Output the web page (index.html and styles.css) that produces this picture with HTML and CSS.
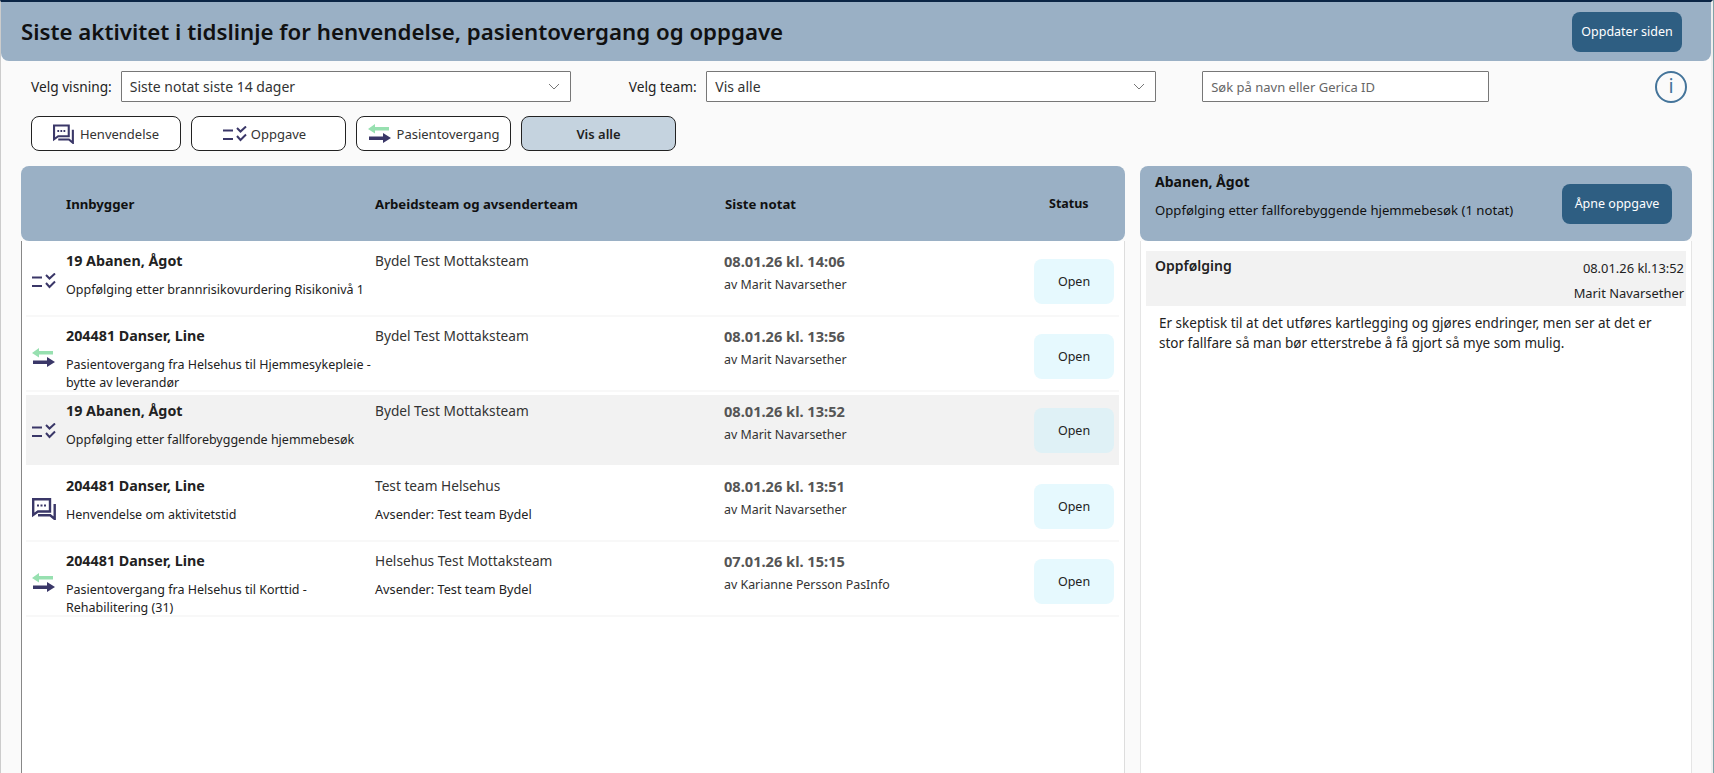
FILE: index.html
```html
<!DOCTYPE html>
<html lang="en">
<head>
    <meta charset="UTF-8">
    <meta name="viewport" content="width=device-width, initial-scale=1.0">
    <title>Siste aktivitet</title>
    <link rel="stylesheet" href="styles.css">
</head>
<body>
<svg class="defs">
    <symbol id="ico-chat" viewBox="0 0 24 22">
        <path d="M1.200 1.200h16.800v12.300H6L1.200 17z" fill="none" stroke="#3a3768" stroke-width="2.400"/>
        <path d="M5 7.500h9" stroke="#3a3768" stroke-width="2.200" stroke-dasharray="2 1.500"/>
        <path d="M22.700 6v15l-4.500-3.700H6" fill="none" stroke="#3a3768" stroke-width="2.400"/>
    </symbol>
    <symbol id="ico-task" viewBox="0 0 24 16">
        <path d="M0 4.500h10M0 13h10" stroke="#3a3768" stroke-width="2" fill="none"/>
        <path d="M14 2l3.500 3.500 5.500-5M14 10l3.500 4 5.500-5.500" stroke="#3a3768" stroke-width="2" fill="none"/>
    </symbol>
    <symbol id="ico-move" viewBox="0 0 23 19">
        <path d="M7 0v3h14v3.500H7v3L0 5z" fill="#97e0b0"/>
        <path d="M15 9v3.500H1V16h14v3l8-5z" fill="#3a3768"/>
    </symbol>
</svg>

<header class="topbar">
    <h1>Siste aktivitet i tidslinje for henvendelse, pasientovergang og oppgave</h1>
    <button class="dark-btn refresh">Oppdater siden</button>
</header>

<div class="filters">
    <label>Velg visning:</label>
    <div class="select first">Siste notat siste 14 dager<svg viewBox="0 0 12 7"><path d="M1 1l5 5 5-5"/></svg></div>
    <label class="team-label">Velg team:</label>
    <div class="select second">Vis alle<svg viewBox="0 0 12 7"><path d="M1 1l5 5 5-5"/></svg></div>
    <div class="search">Søk på navn eller Gerica ID</div>
    <div class="info">i</div>
</div>

<div class="types">
    <button class="type-btn"><svg class="i-chat"><use href="#ico-chat"/></svg>Henvendelse</button>
    <button class="type-btn task-btn"><svg class="i-task"><use href="#ico-task"/></svg>Oppgave</button>
    <button class="type-btn"><svg class="i-move"><use href="#ico-move"/></svg>Pasientovergang</button>
    <button class="type-btn active">Vis alle</button>
</div>

<main class="content">
    <section class="list">
        <div class="list-head">
            <span>Innbygger</span>
            <span>Arbeidsteam og avsenderteam</span>
            <span>Siste notat</span>
            <span class="status-head">Status</span>
        </div>
        <div class="list-body">
            <div class="row">
                <svg class="row-icon i-task"><use href="#ico-task"/></svg>
                <div class="who"><b>19 Abanen, Ågot</b><p>Oppfølging etter brannrisikovurdering Risikonivå 1</p></div>
                <div class="team"><div>Bydel Test Mottaksteam</div></div>
                <div class="note"><b>08.01.26 kl. 14:06</b><p>av Marit Navarsether</p></div>
                <button class="open">Open</button>
            </div>
            <div class="row">
                <svg class="row-icon i-move"><use href="#ico-move"/></svg>
                <div class="who"><b>204481 Danser, Line</b><p>Pasientovergang fra Helsehus til Hjemmesykepleie - bytte av leverandør</p></div>
                <div class="team"><div>Bydel Test Mottaksteam</div></div>
                <div class="note"><b>08.01.26 kl. 13:56</b><p>av Marit Navarsether</p></div>
                <button class="open">Open</button>
            </div>
            <div class="row selected">
                <svg class="row-icon i-task"><use href="#ico-task"/></svg>
                <div class="who"><b>19 Abanen, Ågot</b><p>Oppfølging etter fallforebyggende hjemmebesøk</p></div>
                <div class="team"><div>Bydel Test Mottaksteam</div></div>
                <div class="note"><b>08.01.26 kl. 13:52</b><p>av Marit Navarsether</p></div>
                <button class="open">Open</button>
            </div>
            <div class="row">
                <svg class="row-icon i-chat"><use href="#ico-chat"/></svg>
                <div class="who"><b>204481 Danser, Line</b><p>Henvendelse om aktivitetstid</p></div>
                <div class="team"><div>Test team Helsehus</div><p>Avsender: Test team Bydel</p></div>
                <div class="note"><b>08.01.26 kl. 13:51</b><p>av Marit Navarsether</p></div>
                <button class="open">Open</button>
            </div>
            <div class="row">
                <svg class="row-icon i-move"><use href="#ico-move"/></svg>
                <div class="who"><b>204481 Danser, Line</b><p>Pasientovergang fra Helsehus til Korttid - Rehabilitering (31)</p></div>
                <div class="team"><div>Helsehus Test Mottaksteam</div><p>Avsender: Test team Bydel</p></div>
                <div class="note"><b>07.01.26 kl. 15:15</b><p>av Karianne Persson PasInfo</p></div>
                <button class="open">Open</button>
            </div>
        </div>
    </section>

    <aside class="detail">
        <div class="detail-head">
            <div class="detail-title">
                <h2>Abanen, Ågot</h2>
                <p>Oppfølging etter fallforebyggende hjemmebesøk (1 notat)</p>
            </div>
            <button class="dark-btn">Åpne oppgave</button>
        </div>
        <div class="detail-body">
            <div class="note-head">
                <strong>Oppfølging</strong>
                <div class="note-meta"><div>08.01.26 kl.13:52</div><div>Marit Navarsether</div></div>
            </div>
            <p class="note-text">Er skeptisk til at det utføres kartlegging og gjøres endringer, men ser at det er stor fallfare så man bør etterstrebe å få gjort så mye som mulig.</p>
        </div>
    </aside>
</main>
</body>
</html>
```

FILE: styles.css
```css
* { box-sizing: border-box; }

html { height: 773px; overflow: hidden; border-right: 1px solid #7fa3a8; }

body {
    height: 773px;
    overflow: hidden;
    margin: 0;
    background: #fafafa;
    color: #222;
    font-family: "Noto Sans", "Open Sans", sans-serif;
    font-size: 13px;
    border-top: 2px solid #0b2545;
    border-left: 1px solid #ccc;
    border-right: 2px solid #eee;
}

.defs { display: none; }

button { font-family: inherit; cursor: pointer; }
p { margin: 0; }

.topbar {
    display: flex;
    align-items: center;
    justify-content: space-between;
    height: 59px;
    padding: 0 29px 0 20px;
    background: #9ab0c5;
    border-radius: 0 0 8px 8px;
}
.topbar h1 { margin: 0; font-size: 22.25px; font-weight: 600; color: #111; }

.dark-btn {
    flex-shrink: 0;
    width: 110px;
    height: 40px;
    padding: 0;
    border: 0;
    border-radius: 8px;
    background: #2e5e82;
    color: #fff;
    font-size: 12.5px;
}

.filters {
    display: flex;
    align-items: center;
    height: 31px;
    margin-top: 10px;
    padding-left: 30px;
    font-size: 13.7px;
}
.select, .search {
    display: flex;
    align-items: center;
    justify-content: space-between;
    height: 31px;
    padding: 0 8px;
    background: #fff;
    border: 1px solid #777;
    border-radius: 1px;
    color: #333;
    font-size: 14px;
}
.select svg { width: 12px; height: 7px; margin-right: 2px; }
.select svg path { fill: none; stroke: #777; stroke-width: 1; }
.select.first { width: 450px; margin-left: 9px; }
.team-label { margin-left: 58px; }
.select.second { width: 450px; margin-left: 9.5px; }
.search { width: 287px; margin-left: 46px; color: #666; font-size: 13px; }
.info {
    width: 32px;
    height: 32px;
    margin-left: auto;
    margin-right: 24px;
    border: 2px solid #44749a;
    border-radius: 50%;
    color: #44749a;
    font-size: 20px;
    line-height: 26px;
    text-align: center;
}

.types {
    display: flex;
    gap: 10px;
    margin-top: 14px;
    padding-left: 30px;
}
.type-btn {
    display: flex;
    align-items: center;
    justify-content: center;
    gap: 6px;
    width: 155px;
    height: 35px;
    padding: 0;
    background: #fff;
    border: 1px solid #222;
    border-radius: 8px;
    color: #333;
    font-size: 13px;
}
.type-btn:first-child { width: 150px; }
.type-btn.active { background: #c5d3df; font-weight: 600; color: #222; }
.task-btn { padding-right: 8px; gap: 4px; }

.i-chat { width: 24px; height: 22px; }
.i-task { width: 24px; height: 16px; }
.i-move { width: 23px; height: 19px; }
.type-btn .i-chat { width: 21px; height: 20px; }

.content {
    display: flex;
    gap: 15px;
    margin-top: 15px;
    padding-left: 20px;
    padding-right: 19px;
}

.list { width: 1104px; }
.list-head {
    display: grid;
    grid-template-columns: 309px 350px 324px 1fr;
    align-items: center;
    height: 75px;
    padding-left: 45px;
    background: #9ab0c5;
    border-radius: 8px;
    font-size: 13.2px;
    font-weight: 700;
    color: #111;
}
.status-head { font-size: 12.5px; }

.list-body {
    height: 540px;
    padding: 1px 5px 0 4px;
    background: #fff;
    border-left: 1px solid #888;
    border-right: 1px solid #ddd;
}

.row {
    display: grid;
    grid-template-columns: 34px 309px 349px 1fr 80px;
    height: 75px;
    padding: 9px 5px 0 6px;
    border-bottom: 2px solid #f8f8f8;
    font-size: 12.5px;
}
.row.selected { background: #f2f2f2; height: 70px; margin: 3px 0 2px; padding-top: 6px; border-bottom: 0; }
.row-icon { margin-top: 22px; }
.who b { display: block; font-size: 14.3px; font-weight: 700; line-height: 20px; }
.who p { margin-top: 10px; line-height: 18px; }
.team div { font-size: 13.7px; line-height: 20px; color: #333; }
.team p { margin-top: 9px; line-height: 18px; font-size: 12.7px; }
.note b { display: block; font-size: 14.6px; font-weight: 700; line-height: 20px; color: #555; }
.note p { margin-top: 5px; line-height: 18px; color: #333; font-size: 12.4px; }

.open {
    width: 80px;
    height: 45px;
    margin-top: 8px;
    border: 0;
    border-radius: 8px;
    background: #e6f9fe;
    font-size: 12.5px;
    color: #222;
}
.row.selected .open { background: #dff1f6; margin-top: 7px; }

.detail { width: 552px; }
.detail-head {
    display: flex;
    align-items: center;
    justify-content: space-between;
    height: 75px;
    padding: 0 20px 0 15px;
    background: #9ab0c5;
    border-radius: 8px;
}
.detail-title { align-self: flex-start; padding-top: 6px; }
.detail-head h2 { margin: 0 0 10px; font-size: 14px; line-height: 19px; font-weight: 700; color: #111; }
.detail-head p { font-size: 13.15px; line-height: 18px; color: #111; }

.detail-body {
    height: 540px;
    padding: 10px 5px 0;
    background: #fff;
    border-left: 1px solid #e5e5e5;
    border-right: 1px solid #e5e5e5;
}
.note-head {
    display: flex;
    justify-content: space-between;
    height: 55px;
    padding: 5px 2px 0 9px;
    background: #f2f2f2;
}
.note-head strong { font-size: 14px; font-weight: 600; }
.note-meta { font-size: 12.9px; text-align: right; line-height: 25px; }
.note-text { padding: 7px 25px 0 13px; font-size: 13.5px; line-height: 20px; }
```
